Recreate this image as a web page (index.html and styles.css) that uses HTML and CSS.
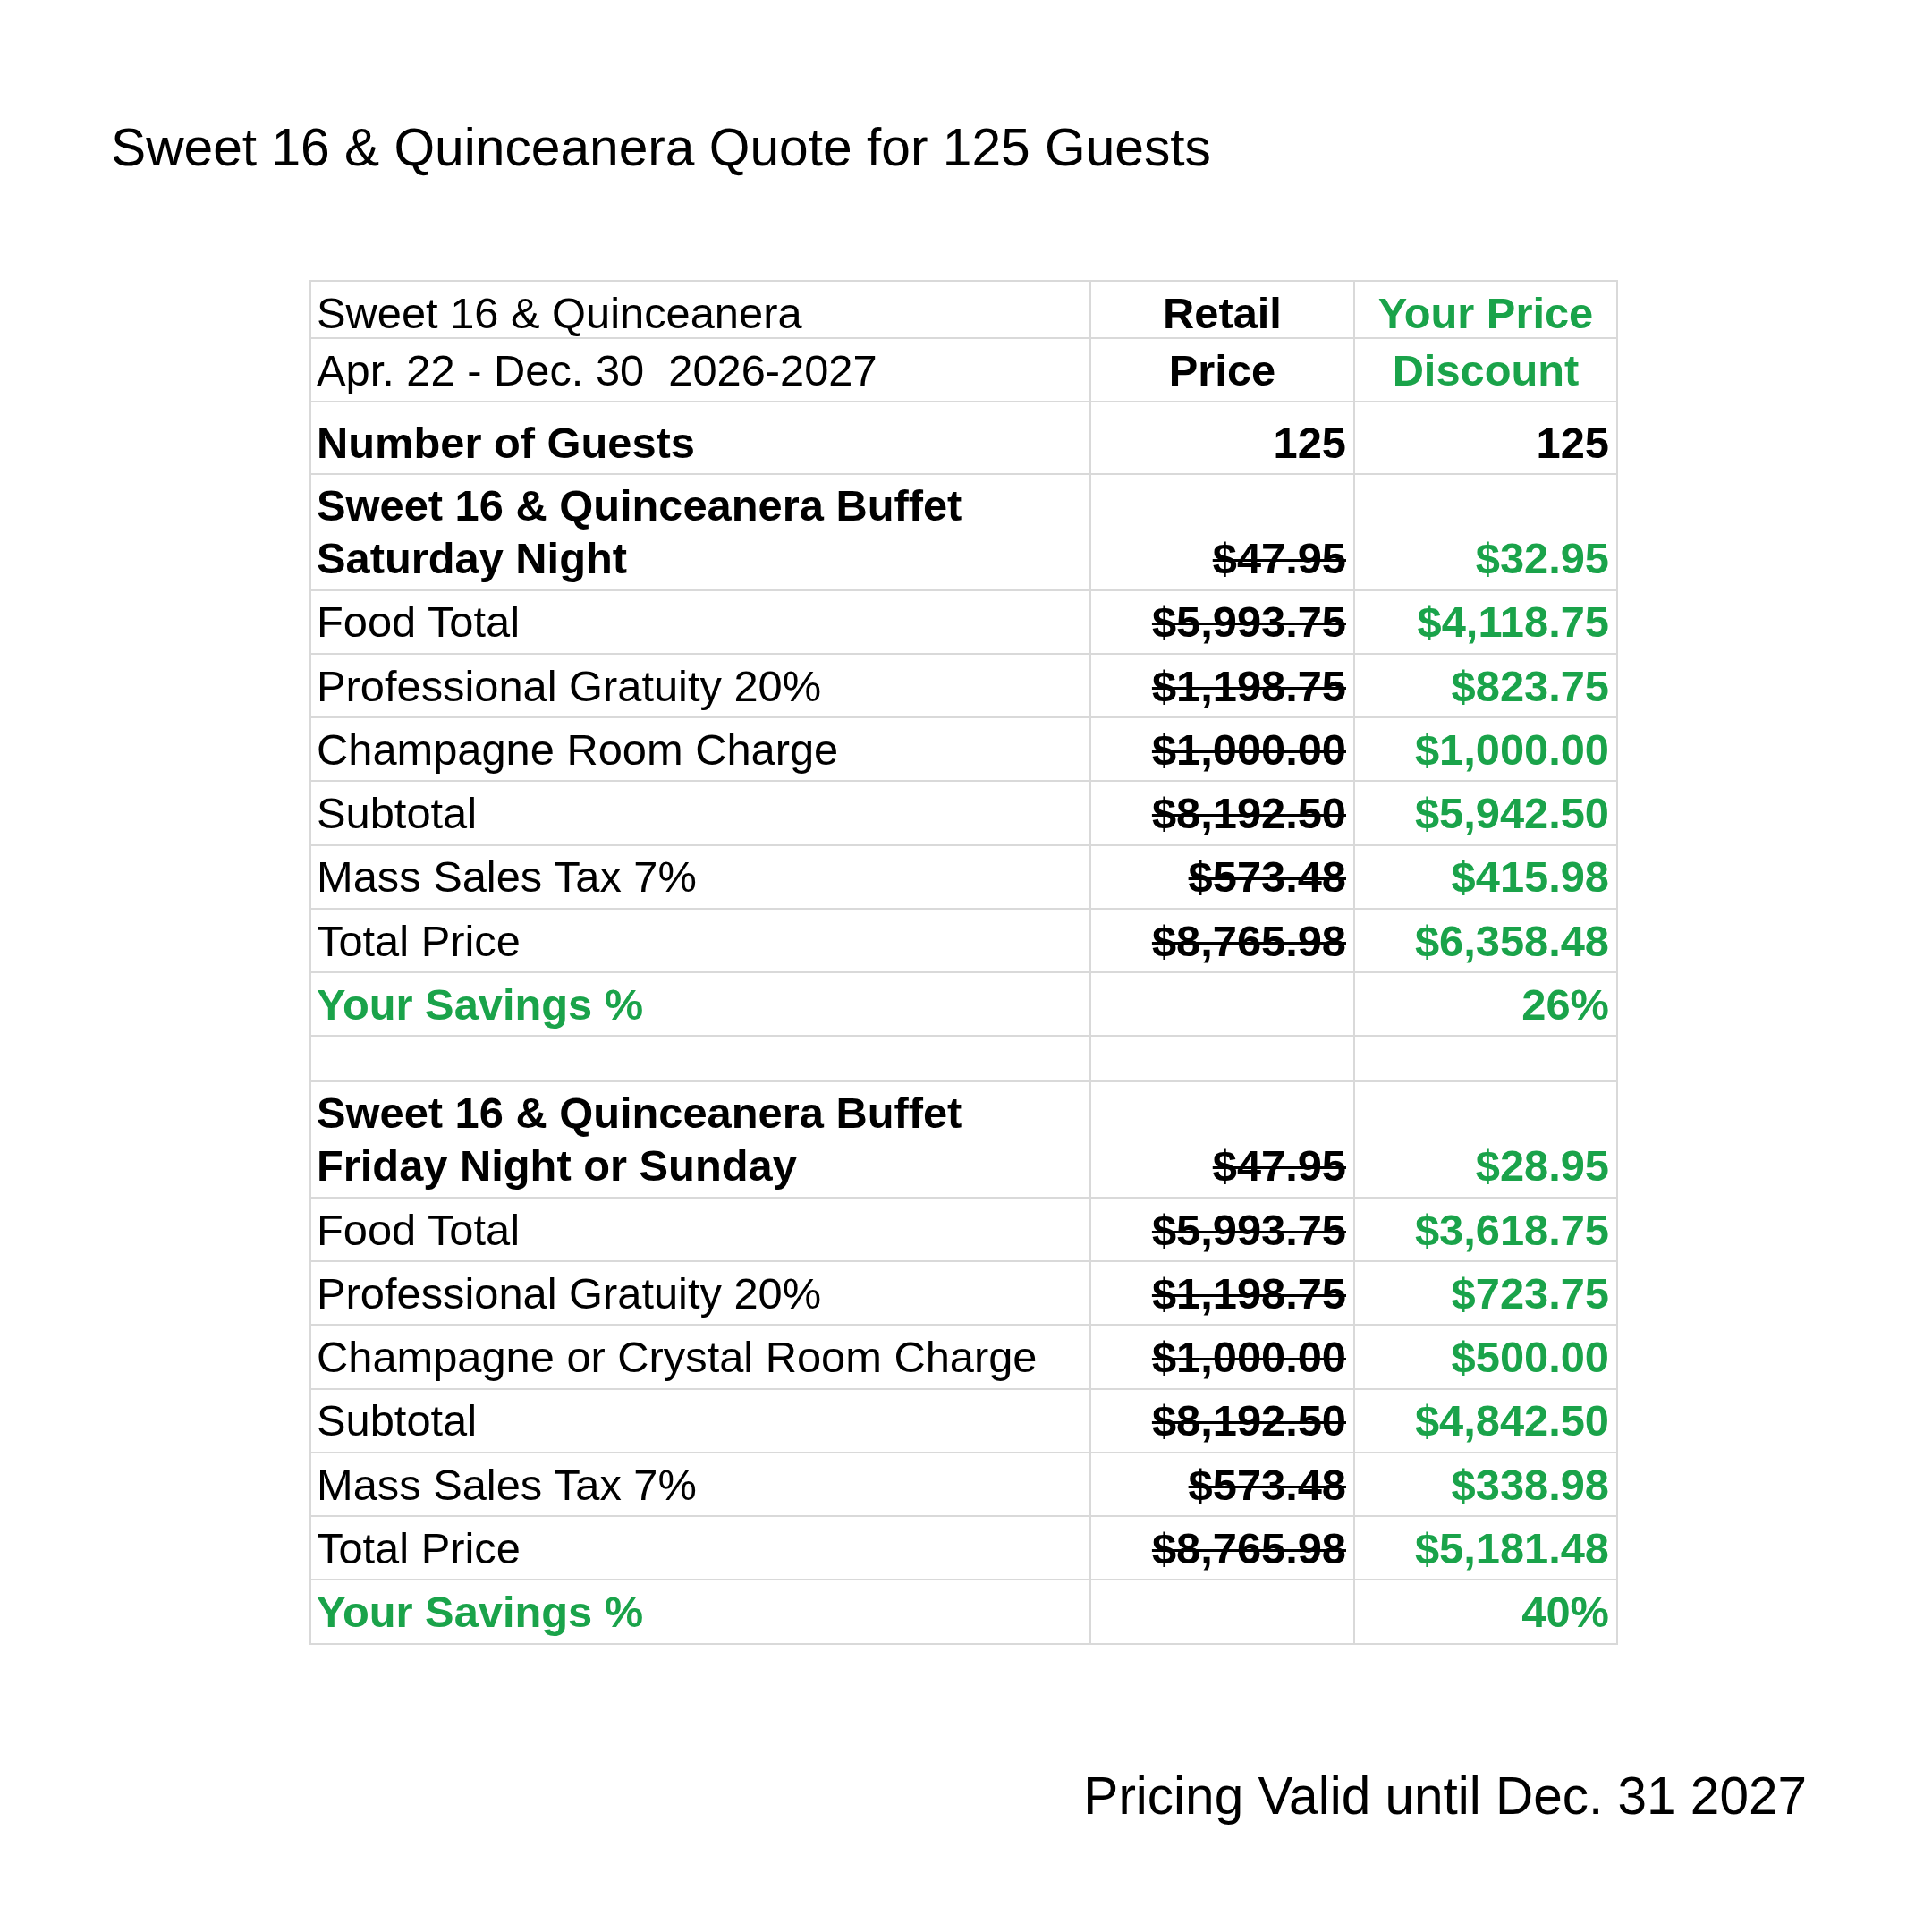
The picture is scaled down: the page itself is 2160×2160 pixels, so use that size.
FILE: index.html
```html
<!DOCTYPE html>
<html lang="en">
<head>
<meta charset="utf-8">
<title>Sweet 16 &amp; Quinceanera Quote for 125 Guests</title>
<link rel="stylesheet" href="styles.css">
</head>
<body>
<div class="page">
  <h1 class="title">Sweet 16 &amp; Quinceanera Quote for 125 Guests</h1>
  <table class="quote">
    <colgroup>
      <col class="c-label">
      <col class="c-retail">
      <col class="c-yours">
    </colgroup>
    <tbody>
      <tr class="r-head1">
        <td>Sweet 16 &amp; Quinceanera</td>
        <td class="head">Retail</td>
        <td class="head green">Your Price</td>
      </tr>
      <tr class="r-head2">
        <td class="pre">Apr. 22 - Dec. 30  2026-2027</td>
        <td class="head">Price</td>
        <td class="head green">Discount</td>
      </tr>
      <tr class="r-guests">
        <td class="bold">Number of Guests</td>
        <td class="num bold">125</td>
        <td class="num bold">125</td>
      </tr>
      <tr class="r-tall">
        <td class="bold">Sweet 16 &amp; Quinceanera Buffet<br>Saturday Night</td>
        <td class="num strike">$47.95</td>
        <td class="num green">$32.95</td>
      </tr>
      <tr class="r-std">
        <td>Food Total</td>
        <td class="num strike">$5,993.75</td>
        <td class="num green">$4,118.75</td>
      </tr>
      <tr class="r-std">
        <td>Professional Gratuity 20%</td>
        <td class="num strike">$1,198.75</td>
        <td class="num green">$823.75</td>
      </tr>
      <tr class="r-std">
        <td>Champagne Room Charge</td>
        <td class="num strike">$1,000.00</td>
        <td class="num green">$1,000.00</td>
      </tr>
      <tr class="r-std">
        <td>Subtotal</td>
        <td class="num strike">$8,192.50</td>
        <td class="num green">$5,942.50</td>
      </tr>
      <tr class="r-std">
        <td>Mass Sales Tax 7%</td>
        <td class="num strike">$573.48</td>
        <td class="num green">$415.98</td>
      </tr>
      <tr class="r-std">
        <td>Total Price</td>
        <td class="num strike">$8,765.98</td>
        <td class="num green">$6,358.48</td>
      </tr>
      <tr class="r-std">
        <td class="bold green">Your Savings %</td>
        <td></td>
        <td class="num green">26%</td>
      </tr>
      <tr class="r-blank">
        <td></td>
        <td></td>
        <td></td>
      </tr>
      <tr class="r-tall">
        <td class="bold">Sweet 16 &amp; Quinceanera Buffet<br>Friday Night or Sunday</td>
        <td class="num strike">$47.95</td>
        <td class="num green">$28.95</td>
      </tr>
      <tr class="r-std">
        <td>Food Total</td>
        <td class="num strike">$5,993.75</td>
        <td class="num green">$3,618.75</td>
      </tr>
      <tr class="r-std">
        <td>Professional Gratuity 20%</td>
        <td class="num strike">$1,198.75</td>
        <td class="num green">$723.75</td>
      </tr>
      <tr class="r-std">
        <td>Champagne or Crystal Room Charge</td>
        <td class="num strike">$1,000.00</td>
        <td class="num green">$500.00</td>
      </tr>
      <tr class="r-std">
        <td>Subtotal</td>
        <td class="num strike">$8,192.50</td>
        <td class="num green">$4,842.50</td>
      </tr>
      <tr class="r-std">
        <td>Mass Sales Tax 7%</td>
        <td class="num strike">$573.48</td>
        <td class="num green">$338.98</td>
      </tr>
      <tr class="r-std">
        <td>Total Price</td>
        <td class="num strike">$8,765.98</td>
        <td class="num green">$5,181.48</td>
      </tr>
      <tr class="r-std">
        <td class="bold green">Your Savings %</td>
        <td></td>
        <td class="num green">40%</td>
      </tr>
    </tbody>
  </table>
  <p class="valid">Pricing Valid until Dec. 31 2027</p>
</div>
</body>
</html>
```

FILE: styles.css
```css
html, body {
  margin: 0;
  padding: 0;
  background: #ffffff;
}

body {
  font-family: "Liberation Sans", Arial, sans-serif;
  color: #000000;
}

.page {
  width: 2160px;
  height: 2160px;
  padding-top: 131px;
  box-sizing: border-box;
}

.title {
  margin: 0 0 0 124px;
  font-size: 58.7px;
  font-weight: normal;
  line-height: 67px;
}

.quote {
  margin: 115px 0 0 346px;
  border-collapse: collapse;
  table-layout: fixed;
  width: 1461px;
  font-size: 48.8px;
}

.c-label { width: 872px; }
.c-retail { width: 295px; }
.c-yours { width: 294px; }

.quote td {
  border: 2px solid #d9d9d9;
  padding: 0 6px 1.5px 6px;
  vertical-align: bottom;
  line-height: 65px;
  white-space: nowrap;
}

.quote td.pre { white-space: pre; }
.quote td.num { padding-right: 8px; }

.r-head1 { height: 63.5px; }
.r-head1 td { line-height: 52px; padding-bottom: 1px; }
.r-head2 { height: 71.5px; }
.r-guests { height: 81px; }
.r-tall { height: 129.5px; }
.r-tall td { line-height: 59px; padding-bottom: 4.5px; }
.r-std { height: 71.25px; }
.r-blank { height: 51px; }

.head {
  text-align: center;
  font-weight: bold;
}

.num {
  text-align: right;
  font-weight: bold;
}

.bold { font-weight: bold; }

.green { color: #1aa34a; }

.strike {
  text-decoration: line-through;
  text-decoration-thickness: 3px;
}

.valid {
  margin: 135px 140px 0 0;
  text-align: right;
  font-size: 58.5px;
  line-height: 67px;
}
```
